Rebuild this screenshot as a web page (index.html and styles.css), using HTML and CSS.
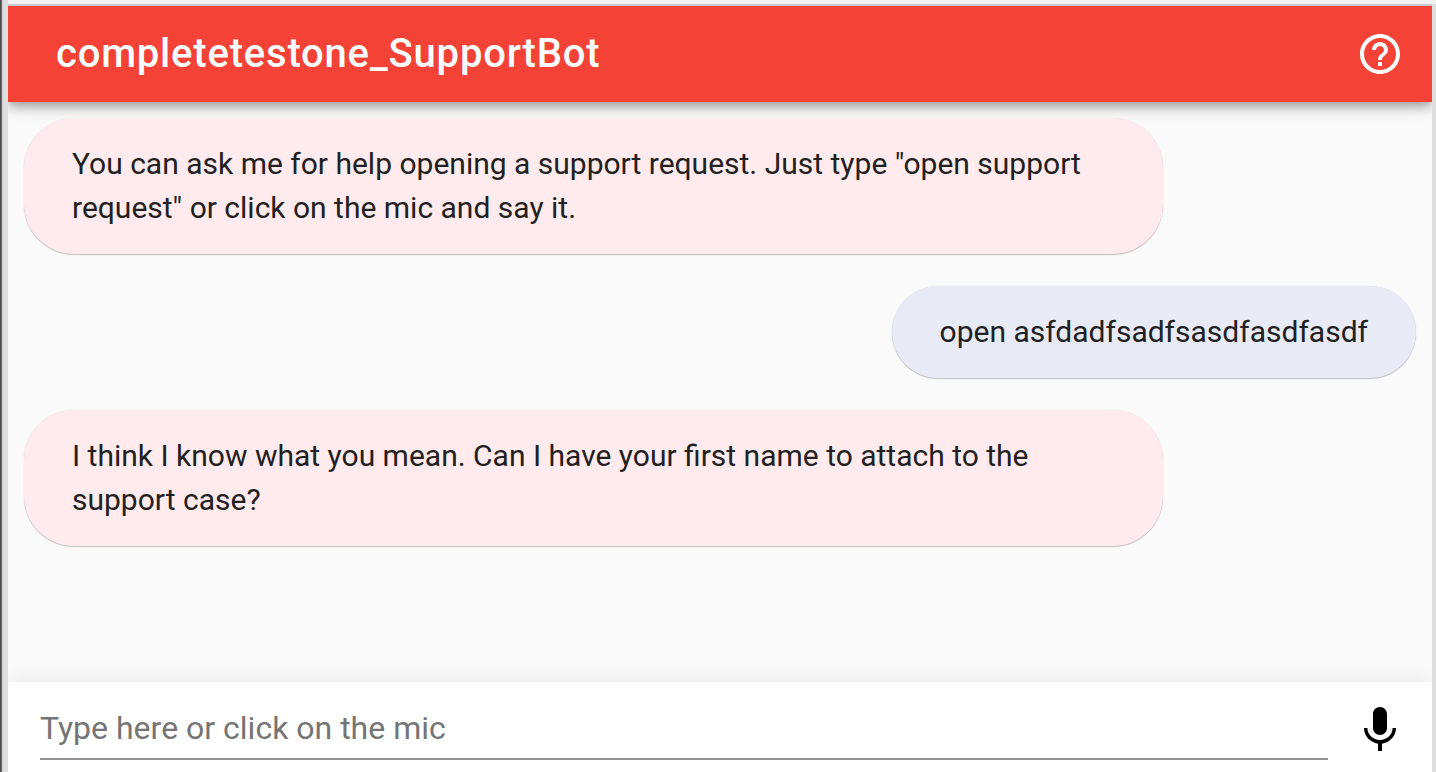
FILE: index.html
```html
<!DOCTYPE html>
<html lang="en">
<head>
<meta charset="utf-8">
<title>completetestone_SupportBot</title>
<link rel="stylesheet" href="styles.css">
</head>
<body>
<div class="frame">
  <div class="app">
    <header class="toolbar">
      <h1 class="title">completetestone_SupportBot</h1>
      <button class="icon-button" type="button" aria-label="Help">
        <svg class="icon" viewBox="0 0 24 24" fill="currentColor" aria-hidden="true"><path d="M11 18h2v-2h-2v2zm1-16C6.480 2 2 6.480 2 12s4.480 10 10 10 10-4.480 10-10S17.520 2 12 2zm0 18c-4.410 0-8-3.590-8-8s3.590-8 8-8 8 3.590 8 8-3.590 8-8 8zm0-14c-2.210 0-4 1.790-4 4h2c0-1.100.9-2 2-2s2 .9 2 2c0 2-3 1.750-3 5h2c0-2.250 3-2.500 3-5 0-2.210-1.790-4-4-4z"/></svg>
      </button>
    </header>
    <main class="messages">
      <p class="bubble bot">You can ask me for help opening a support request. Just type "open support request" or click on the mic and say it.</p>
      <p class="bubble human">open asfdadfsadfsasdfasdfasdf</p>
      <p class="bubble bot">I think I know what you mean. Can I have your first name to attach to the support case?</p>
    </main>
    <form class="composer">
      <input class="entry" type="text" placeholder="Type here or click on the mic" aria-label="Message">
      <button class="icon-button" type="button" aria-label="Speak">
        <svg class="icon" viewBox="0 0 24 24" fill="currentColor" aria-hidden="true"><path d="M12 15c1.930 0 3.490-1.570 3.490-3.500V4.500C15.490 2.570 13.930 1 12 1S8.500 2.570 8.500 4.500v7c0 1.930 1.570 3.500 3.500 3.500zm6.300-3.500c0 3.500-3 5.950-6.300 5.950S5.700 15 5.700 11.500H4c0 3.980 3.170 7.270 7 7.840V23h2v-3.660c3.830-.56 7-3.850 7-7.840h-1.700z"/></svg>
      </button>
    </form>
  </div>
</div>
</body>
</html>
```
FILE: styles.css
```css
* {
  box-sizing: border-box;
}

body {
  margin: 0;
  font-family: Roboto, "Liberation Sans", sans-serif;
  color: #212121;
}

.frame {
  height: 100vh;
  padding: 4px 4px 0 8px;
  background: linear-gradient(to right, #48484a 0, #48484a 1px, #777 1px, #777 2px, #c8c8c8 2px, #c8c8c8 3px, #dedede 3px);
  position: relative;
}

.frame::before {
  content: "";
  position: absolute;
  inset: 0 0 auto 8px;
  height: 4px;
  background: #f2f2f2;
}

.app {
  display: flex;
  flex-direction: column;
  height: 100%;
  overflow: hidden;
  background: #fafafa;
  border-top: 2px solid #c9c9c9;
}

.toolbar {
  display: flex;
  flex: none;
  align-items: center;
  justify-content: space-between;
  height: 96px;
  padding: 0 28px 0 48px;
  background: #f44336;
  color: #fff;
  box-shadow: 0 4px 8px -2px rgba(0, 0, 0, .2), 0 8px 10px rgba(0, 0, 0, .14), 0 2px 20px rgba(0, 0, 0, .12);
}

.title {
  margin: 0;
  padding-bottom: 2px;
  font-size: 40px;
  font-weight: 500;
  letter-spacing: .02em;
}

.icon-button {
  display: flex;
  flex: none;
  padding: 0;
  border: 0;
  background: none;
  color: inherit;
}

.icon {
  width: 48px;
  height: 48px;
}

.messages {
  display: flex;
  flex: 1;
  flex-direction: column;
  align-items: flex-start;
  gap: 32px;
  padding: 16px;
}

.bubble {
  max-width: calc((100% + 32px) * .8);
  margin: 0;
  padding: 24px 48px;
  border-radius: 50px;
  font-size: 30px;
  line-height: 44px;
  box-shadow: 0 1px 1px rgba(0, 0, 0, .22), 0 0 1px rgba(0, 0, 0, .12);
}

.bot {
  background: #ffebee;
}

.human {
  align-self: flex-end;
  background: #e8eaf6;
}

.composer {
  display: flex;
  flex: none;
  align-items: center;
  gap: 28px;
  height: 90px;
  padding: 4px 28px 0 32px;
  background: #fff;
  color: #000;
  box-shadow: 0 -2px 20px rgba(0, 0, 0, .08);
}

.entry {
  flex: 1;
  min-width: 0;
  height: 62px;
  padding: 0;
  border: 0;
  border-bottom: 2px solid #949494;
  outline: 0;
  background: none;
  color: #212121;
  font: 32px Roboto, "Liberation Sans", sans-serif;
}

.entry::placeholder {
  color: #757575;
  opacity: 1;
}
```
